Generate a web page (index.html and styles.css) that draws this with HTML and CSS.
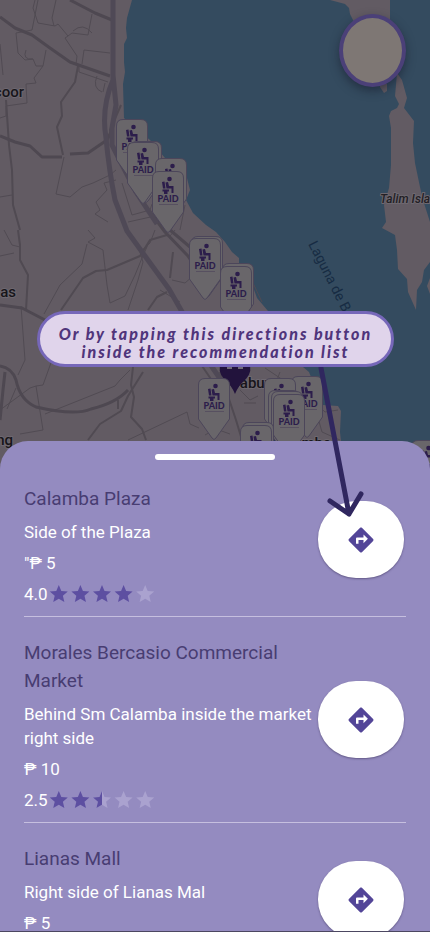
FILE: index.html
```html
<!DOCTYPE html>
<html lang="en">
<head>
<meta charset="utf-8">
<meta name="viewport" content="width=device-width, initial-scale=1">
<title>Recommended terminals</title>
<link rel="stylesheet" href="styles.css">
</head>
<body>
<div class="screen">
  <section class="map" aria-label="Map">
    <svg class="map-art" viewBox="0 0 430 470" preserveAspectRatio="xMidYMin slice">
      <defs>
        <g id="seat">
          <circle cx="17.500" cy="8" r="2.300"/>
          <path d="M10 11L12.500 10.500 13.500 17.500H11Z M13.500 11.500L16 11 17 15H21.500V22H19.500V17.500H14.500Z M10.500 18.500H17V20.500H15.500V23H12V20.500H10.500Z"/>
        </g>
        <g id="pin">
          <path class="pin-body" d="M7 .5H25Q31.500 .5 31.500 7V41L18 60Q16 63 14 60L.5 41V7Q.5 .5 7 .5Z"/>
          <use href="#seat" class="pin-ink"/>
          <text class="pin-text" x="16" y="31" text-anchor="middle">PAID</text>
          <path class="pin-rule" d="M7 33.500H26"/>
        </g>
      </defs>
      <rect class="land" width="430" height="470"/>
      <path class="water" d="M132 0L127 18 126 28 127 38 124 44 124 62 125 72 123 84 124 118 150 140 165 158 187 178 190 190 186 200 193 213 206 225 216 232 225 242 232 252 239 258 239 263 250 278 257 298 268 311 285 335 303 367 309 372 313 382 320 395 323 405 338 406 341 411 340 432 344 470H430V0Z"/>
      <path class="land" d="M330 0L345 4 349 8 350 14 354 22 372 30 390 20V0Z M380 82L387 84 387 91 384 93 380 87Z M397 73L402 80 407 98 404 108 414 121 413 143 415 163 420 187 423 200 430 222V262L424 270 422 282 417 290 416 310 408 292 407 279 398 269 397 250 395 235 382 228 386 222 384 205 389 188 391 165 391 128 389 116 391 111 397 108 399 104 395 96Z M430 278L427 286 430 294Z"/>
      <g class="minor">
        <path d="M35 0L33 8 38 23 55 26 58 24 68 36 72 33 88 35 92 14 M56 0L52 18 54 26 M68 36L65 38 77 56 76 64 M38 0L32 30 16 33 18 53 25 60 33 59 36 66 43 66 46 50 M26 50Q22 60 33 59 M82 64L84 50 110 53 M79 67L79 72 108 82 M97 76Q92 88 102 92 M105 83L103 92 M0 44L3 75 M43 66L34 78 36 83 26 84 27 103 6 106 M0 118L6 116 6 106 M64 157L56 194 70 197 82 187 93 183 110 175 116 170 M116 180L104 183 107 190 96 202 100 210 95 214 108 222 M122 183L132 215 150 210 152 204 M128 222L155 216 M0 197L12 195 M185 205L180 230"/>
        <path d="M73 31Q83 22 92 33 M4 230L12 245 20 247 M88 230L95 238 88 242 103 250 107 285 110 303 125 296 135 275 142 258 150 240 M87 244L82 264 60 285 44 314 M0 256L14 253 M21 306L25 360 18 375 M52 360L43 385 36 386 30 388 0 410 M7 409L16 388 M36 386L43 430 20 434 M45 414L85 398 115 386 120 380 130 370 M128 440L187 412 190 424 199 428 M155 230L150 243 140 252 143 262 138 280 128 310 M170 236L175 230 M172 280L185 283 193 276 M160 290L180 302 M238 280L252 300 M245 266L262 302 M205 435L216 429 230 434 M240 390L250 400 258 396 M280 372L275 385 M244 403L256 403 M265 368L283 380 M312 400L325 412 338 410 M318 418L322 432 340 440"/>
      </g>
      <g class="mid">
        <path d="M78 66L75 82 61 102 62 116 57 127 63 155 M6 100L9 145 12 170 13 205 20 230 M18 230L20 245 20 260 28 275 26 310 M61 310L83 278 96 271 107 270 140 256 150 240 167 235 M167 292L157 297 148 310 M173 252L170 278 M133 367L131 385 134 397 131 417 142 429 146 440 M88 440L100 424 121 411 128 396 143 372 M118 400L118 409 M121 105L110 130 112 138 M220 372L236 420 242 440 M198 360L215 385"/>
      </g>
      <g class="major">
        <path d="M0 17L15 28 32 35 50 48 70 62 110 76 M70 0L95 13 112 20 M0 136L15 142 30 146 42 157 62 157 M70 154L88 153 107 140 112 130 M0 305L22 308 45 320 M0 366Q12 368 16 380 Q20 400 36 407Q75 416 91 409Q116 403 128 390 M5 372L3 390 0 420 M136 193L165 232 188 256 210 290 M170 230L190 247"/>
        <path class="wide" d="M113 0V80 M113 80Q101 108 106 138Q109 170 115 200L127 231 145 256 169 289 185 317 212 367 228 390 M113 75L116 105 112 128 112 145 136 192 157 224"/>
      </g>
      <g class="place">
        <text x="24" y="97" text-anchor="end">coor</text>
        <text x="16" y="297" text-anchor="end">as</text>
        <text x="13" y="445" text-anchor="end">ng</text>
        <text x="230" y="388">Cabuyao</text>
        <text x="331" y="448" text-anchor="end">Calamba</text>
        <text class="isle" x="380" y="203">Talim Isla</text>
        <text class="lake" transform="translate(308 244) rotate(63)">Laguna de Bay</text>
      </g>
      <use href="#pin" x="116" y="119"/>
      <use href="#pin" x="130" y="141"/><use href="#pin" x="127" y="142"/>
      <use href="#pin" x="155" y="158"/>
      <use href="#pin" x="152" y="171"/>
      <use href="#pin" x="191" y="236"/><use href="#pin" x="189" y="238"/>
      <use href="#pin" x="222" y="263"/><use href="#pin" x="220" y="266"/>
      <path class="here" d="M235 394Q232 386 224 379Q217 371 221 362H249Q253 371 246 379Q238 386 235 394Z"/>
      <path class="here-mark" d="M227 364H232V369H227Z M238 364H243V369H238Z"/>
      <use href="#pin" x="198" y="378"/>
      <use href="#pin" x="291" y="376"/>
      <use href="#pin" x="264" y="378"/><use href="#pin" x="268" y="390"/><use href="#pin" x="271" y="391"/><use href="#pin" x="273" y="394"/>
      <use href="#pin" x="242" y="422"/><use href="#pin" x="240" y="425"/>
      <use href="#pin" x="411" y="440"/>
    </svg>
    <button class="round-button" type="button" aria-label="Map menu"></button>
    <div class="hint">
      <p class="hint-text">Or by tapping this directions button<br>inside the recommendation list</p>
      <svg class="hint-arrow" width="50" height="160" viewBox="0 0 50 160" aria-hidden="true"><path d="M7 3L35 149M16 136L35 149 47 129"/></svg>
    </div>
  </section>

  <main class="sheet">
    <div class="handle"></div>
    <svg class="symbols" width="0" height="0" aria-hidden="true">
      <defs>
        <path id="star" d="M12 17.270L18.180 21 16.540 13.970 22 9.240 14.810 8.630 12 2 9.190 8.630 2 9.240 7.460 13.970 5.820 21Z"/>
        <path id="half" d="M12 2V17.270L5.820 21 7.460 13.970 2 9.240 9.190 8.630Z"/>
        <path id="turn" d="M21.710 11.290l-9-9c-.39-.39-1.020-.39-1.410 0l-9 9c-.39.39-.39 1.020 0 1.410l9 9c.39.39 1.020.39 1.410 0l9-9c.39-.38.39-1.010 0-1.410zM14 14.500V12h-4v3H8v-4c0-.55.45-1 1-1h5V7.500l3.500 3.500-3.500 3.500z"/>
      </defs>
    </svg>
    <ul class="list">
      <li class="item">
        <div class="info">
          <h2>Calamba Plaza</h2>
          <p>Side of the Plaza</p>
          <p>"₱ 5</p>
          <div class="rating"><span>4.0</span>
            <svg class="stars" viewBox="0 0 120 24" role="img" aria-label="4 of 5 stars"><use href="#star"/><use href="#star" x="24"/><use href="#star" x="48"/><use href="#star" x="72"/><use href="#star" x="96" class="off"/></svg>
          </div>
        </div>
        <button class="go" type="button" aria-label="Directions to Calamba Plaza"><svg viewBox="0 0 24 24"><use href="#turn"/></svg></button>
      </li>
      <li class="item">
        <div class="info">
          <h2>Morales Bercasio Commercial Market</h2>
          <p>Behind Sm Calamba inside the market right side</p>
          <p>₱ 10</p>
          <div class="rating"><span>2.5</span>
            <svg class="stars" viewBox="0 0 120 24" role="img" aria-label="2.5 of 5 stars"><use href="#star"/><use href="#star" x="24"/><use href="#star" x="48" class="off"/><use href="#half" x="48"/><use href="#star" x="72" class="off"/><use href="#star" x="96" class="off"/></svg>
          </div>
        </div>
        <button class="go" type="button" aria-label="Directions to Morales Bercasio Commercial Market"><svg viewBox="0 0 24 24"><use href="#turn"/></svg></button>
      </li>
      <li class="item">
        <div class="info">
          <h2>Lianas Mall</h2>
          <p>Right side of Lianas Mal</p>
          <p>₱ 5</p>
          <div class="rating"></div>
        </div>
        <button class="go" type="button" aria-label="Directions to Lianas Mall"><svg viewBox="0 0 24 24"><use href="#turn"/></svg></button>
      </li>
    </ul>
  </main>
</div>
</body>
</html>
```
FILE: styles.css
```css
* { box-sizing: border-box; }

body {
  margin: 0;
  font-family: Roboto, "Liberation Sans", sans-serif;
}

h2, p, ul { margin: 0; padding: 0; }

.screen {
  display: flex;
  flex-direction: column;
  height: 100vh;
  overflow: hidden;
  background: #615b62;
  border-bottom: 1px solid #4c4761;
}

/* Map */
.map {
  position: relative;
  flex: none;
  height: 470px;
}

.map-art {
  display: block;
  width: 100%;
  height: 100%;
}

.land { fill: #625b63; }
.water { fill: #344b5f; }

.minor, .mid, .major { fill: none; stroke-linejoin: round; }
.minor { stroke: #514b53; stroke-width: 1; }
.mid { stroke: #504a52; stroke-width: 2; }
.major { stroke: #4e4851; stroke-width: 3; }
.wide { stroke: #4f4956; stroke-width: 5; }

.place {
  font-size: 15px;
  font-weight: 500;
  fill: #17151a;
  stroke: #6e6870;
  stroke-width: 2;
  stroke-linejoin: round;
  paint-order: stroke;
}

.place .isle {
  font-size: 12px;
  font-style: italic;
  font-weight: 500;
  fill: #222025;
}

.place .lake {
  font-size: 14px;
  font-weight: 400;
  fill: #172c43;
  stroke: none;
}

.pin-body { fill: #69666a; stroke: #4c465a; stroke-width: 1; }
.pin-ink { fill: #2c1d4b; }
.pin-text { fill: #2c1d4b; font: 900 9px Lato, sans-serif; }
.pin-rule { stroke: #575060; stroke-width: 1; }
.here { fill: #22133c; }
.here-mark { fill: #6f6975; }

.round-button {
  position: absolute;
  top: 14px;
  right: 24px;
  width: 67px;
  height: 73px;
  border: 4px solid #4b4078;
  border-radius: 50%;
  background: #7e7774;
  box-shadow: 0 4px 10px rgba(20, 24, 40, 0.5);
}

/* Callout */
.hint {
  position: absolute;
  top: 311px;
  left: 37px;
  right: 36px;
  z-index: 2;
}

.hint-text {
  position: relative;
  z-index: 1;
  padding: 11px 0 3px;
  border: 3px solid #7667b9;
  border-radius: 28px;
  background: #e0d4eb;
  color: #50357b;
  font: italic 900 16px/18px Lato, sans-serif;
  letter-spacing: 2px;
  text-align: center;
  white-space: nowrap;
}

.hint-arrow {
  position: absolute;
  top: 54px;
  right: 30px;
  fill: none;
  stroke: #30275f;
  stroke-width: 5;
  stroke-linecap: round;
  stroke-linejoin: round;
}

/* Recommendation sheet */
.sheet {
  position: relative;
  z-index: 1;
  flex: 1;
  min-height: 0;
  margin-top: -29px;
  padding: 13px 24px 0;
  overflow: hidden;
  border-radius: 28px 28px 0 0;
  background: #948bc0;
}

.handle {
  width: 120px;
  height: 6px;
  margin: 0 auto 25px;
  border-radius: 3px;
  background: #fff;
}

.symbols { position: absolute; }

.list { list-style: none; }

.item {
  display: flex;
  align-items: center;
  gap: 4px;
  padding-bottom: 10px;
  margin-bottom: 22px;
  border-bottom: 1px solid #c6bfdf;
}

.info {
  display: flex;
  flex: 1;
  flex-direction: column;
  gap: 7px;
  color: #fff;
  font-size: 17px;
  line-height: 24px;
}

.info h2 {
  color: #483d72;
  font-size: 19px;
  font-weight: 400;
  line-height: 28px;
}

.rating {
  display: flex;
  align-items: center;
  height: 24px;
}

.stars {
  width: 108px;
  height: 22px;
  fill: #5d4fa1;
}

.stars .off { fill: #aaa2cf; }

.go {
  display: grid;
  flex: none;
  place-items: center;
  width: 86px;
  height: 77px;
  margin: 0 2px 12px 0;
  padding: 0;
  border: 0;
  border-radius: 38px;
  background: #fff;
  box-shadow: 0 1px 2px rgba(50, 40, 80, 0.5);
}

.go svg {
  width: 30px;
  height: 30px;
  fill: #534598;
}
```
